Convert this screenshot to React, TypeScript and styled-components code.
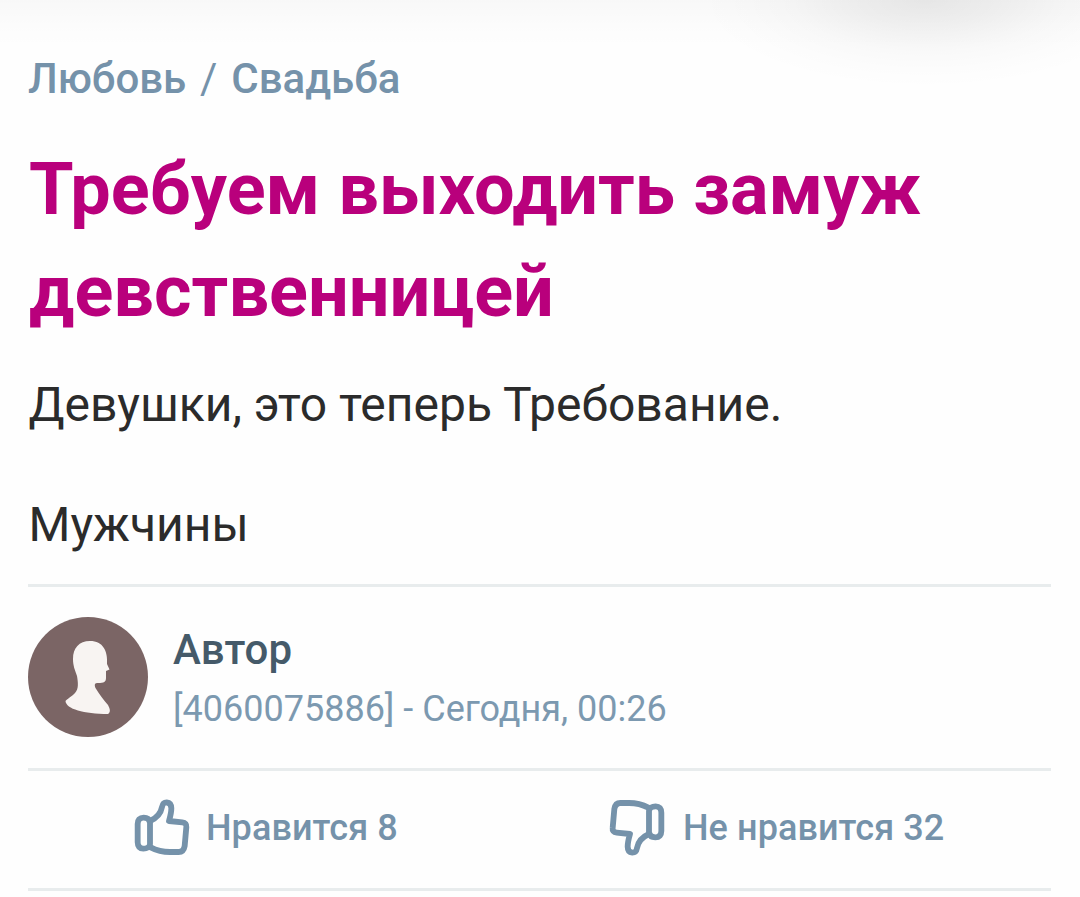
import styled, { createGlobalStyle } from "styled-components";

const GlobalStyle = createGlobalStyle`
	* {
		box-sizing: border-box;
	}

	body {
		margin: 0;
		background-color: #fefefe;
		font-family: Roboto, "Noto Sans", sans-serif;
	}
`;

const Page = styled.main`
	width: 1080px;
	height: 897px;
	padding: 49px 29px 0 28px;
	overflow: hidden;
	background:
		radial-gradient(
			ellipse 225px 88px at 925px 0,
			rgba(0, 0, 0, 0.075) 0%,
			rgba(0, 0, 0, 0.052) 30%,
			rgba(0, 0, 0, 0.02) 60%,
			rgba(0, 0, 0, 0.006) 80%,
			transparent 100%
		),
		linear-gradient(rgba(0, 0, 0, 0.025), rgba(0, 0, 0, 0.008) 26px, transparent 48px),
		#fefefe;
`;

const Breadcrumbs = styled.nav`
	display: flex;
	gap: 13px;
	font-size: 42px;
	font-weight: 500;
	line-height: 60px;
	color: #7592aa;
`;

const Separator = styled.span`
	width: 19px;
	font-weight: 400;
	text-align: center;
`;

const Title = styled.h1`
	margin: 30px 0 0;
	padding-left: 1px;
	font-size: 72px;
	font-weight: 700;
	line-height: 102px;
	letter-spacing: 0.03px;
	color: #b9007c;
`;

const Text = styled.div`
	margin-top: 32px;
	padding-bottom: 29px;
	border-bottom: 3px solid #e8eced;
	font-size: 48px;
	line-height: 60px;
	color: #2b2b2b;
`;

const Paragraph = styled.p`
	margin: 0;
	padding-left: 0.5px;

	& + & {
		margin-top: 60px;
	}
`;

const Author = styled.section`
	display: flex;
	align-items: center;
	gap: 25px;
	height: 184px;
	padding-bottom: 1px;
	border-bottom: 3px solid #e8eced;
`;

const Avatar = styled.svg`
	width: 120px;
	height: 120px;
	flex-shrink: 0;
`;

const AuthorInfo = styled.div`
	padding-top: 4px;
`;

const AuthorName = styled.div`
	font-size: 42px;
	font-weight: 500;
	line-height: 60px;
	color: #455a69;
`;

const AuthorMeta = styled.div`
	font-size: 36px;
	line-height: 58px;
	color: #7c99b0;
`;

const Votes = styled.div`
	display: flex;
	height: 120px;
	padding-bottom: 3px;
	border-bottom: 3px solid #e8eced;
`;

const VoteButton = styled.button<{ $offset: number; $width: number; $gap: number }>`
	display: flex;
	align-items: center;
	gap: ${({ $gap }) => $gap}px;
	width: ${({ $width }) => $width}px;
	padding: 0 0 0 ${({ $offset }) => $offset}px;
	border: none;
	background: none;
	font-family: inherit;
	font-size: 36px;
	font-weight: 500;
	letter-spacing: 0.08px;
	white-space: nowrap;
	color: #7592aa;
	cursor: pointer;
`;

const ThumbSvg = styled.svg<{ $down?: boolean }>`
	width: 56px;
	height: 57px;
	margin-bottom: 2px;
	flex-shrink: 0;
	transform: ${({ $down }) => ($down ? "rotate(180deg)" : "none")};
`;

const Thumb = ({ down }: { down?: boolean }) => (
	<ThumbSvg
		$down={down}
		viewBox="0 0 168 171"
		fill="none"
		stroke="currentColor"
		strokeWidth="17.5"
		strokeLinejoin="round"
		strokeLinecap="round"
	>
		<path d="M48 70C46 60 40 56 29 56C17 56 11 63 11 75V130C11 142 17 149 28 149C39 149 48 144 48 134Z" />
		<path d="M48 66C66 58 80 46 84 24C86 13 90 10 98 10C108 11 112 18 112 28C112 42 109 52 105 66L145 70C154 71 158 76 157 84L152 141C150 153 144 159 134 159H108C84 159 67 154 50 145" />
	</ThumbSvg>
);

const App = () => {
	return (
		<>
			<GlobalStyle />
			<Page>
				<Breadcrumbs>
					<span>Любовь</span>
					<Separator>/</Separator>
					<span>Свадьба</span>
				</Breadcrumbs>
				<Title>Требуем выходить замуж девственницей</Title>
				<Text>
					<Paragraph>Девушки, это теперь Требование.</Paragraph>
					<Paragraph>Мужчины</Paragraph>
				</Text>
				<Author>
					<Avatar viewBox="0 0 120 120">
						<circle cx="60" cy="60" r="60" fill="#7b6565" />
						<path
							fill="#f8f4f2"
							d="M62 24C51 24 45 31 45 42C45 49 47 53 49 59C50 65 51 72 47 76C43 80 39 82 37.5 84C38 92 56 97 80 97C83 95 82 92 80 88C75 82 71 77 67.5 71C66 67 67 66 70 66C76 66 78 65 78 61V54L81.5 52.5L79 47C80 34 75 24 62 24Z"
						/>
					</Avatar>
					<AuthorInfo>
						<AuthorName>Автор</AuthorName>
						<AuthorMeta>[4060075886] - Сегодня, 00:26</AuthorMeta>
					</AuthorInfo>
				</Author>
				<Votes>
					<VoteButton $offset={106} $width={581} $gap={16}>
						<Thumb />
						Нравится 8
					</VoteButton>
					<VoteButton $offset={0} $width={442} $gap={18}>
						<Thumb down />
						Не нравится 32
					</VoteButton>
				</Votes>
			</Page>
		</>
	);
};

export default App;
